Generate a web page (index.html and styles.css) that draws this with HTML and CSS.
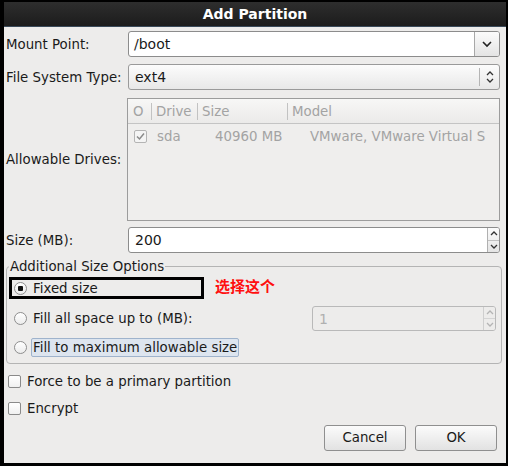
FILE: index.html
```html
<!DOCTYPE html>
<html>
<head>
<meta charset="utf-8">
<link rel="stylesheet" href="styles.css">
</head>
<body>
<div class="window">
  <div class="titlebar">Add Partition</div>
  <div class="content">
    <div class="form">
      <label class="lbl">Mount Point:</label>
      <div class="combo-entry">
        <div class="ce-text">/boot</div>
        <div class="ce-btn">
          <svg width="12" height="8" viewBox="0 0 12 8"><path d="M2 2 L6 6 L10 2" fill="none" stroke="#222" stroke-width="1.6"/></svg>
        </div>
      </div>

      <label class="lbl">File System Type:</label>
      <div class="combo-btn">
        <div class="cb-text">ext4</div>
        <div class="cb-sep"></div>
        <div class="cb-arrows">
          <svg width="10" height="14" viewBox="0 0 10 14"><path d="M2 5 L5 2 L8 5 M2 9 L5 12 L8 9" fill="none" stroke="#333" stroke-width="1.3"/></svg>
        </div>
      </div>

      <label class="lbl">Allowable Drives:</label>
      <div class="tree">
        <div class="tree-head">
          <div class="th c0">O</div>
          <div class="th c1">Drive</div>
          <div class="th c2">Size</div>
          <div class="th c3">Model</div>
        </div>
        <div class="tree-row">
          <div class="td c0"><span class="tcheck"><svg width="11" height="11" viewBox="0 0 11 11"><path d="M2 5.5 L4.5 8 L9 2.5" fill="none" stroke="#8a8a8a" stroke-width="1.5"/></svg></span></div>
          <div class="td c1">sda</div>
          <div class="td c2">40960 MB</div>
          <div class="td c3">VMware, VMware Virtual S</div>
        </div>
      </div>

      <label class="lbl">Size (MB):</label>
      <div class="spin">
        <div class="sp-text">200</div>
        <div class="sp-btns">
          <div class="sp-b"><svg width="10" height="7" viewBox="0 0 10 7"><path d="M2 5 L5 2 L8 5" fill="none" stroke="#333" stroke-width="1.3"/></svg></div>
          <div class="sp-b sp-b2"><svg width="10" height="7" viewBox="0 0 10 7"><path d="M2 2 L5 5 L8 2" fill="none" stroke="#333" stroke-width="1.3"/></svg></div>
        </div>
      </div>
    </div>

    <fieldset class="frame">
      <legend>Additional Size Options</legend>
      <div class="opt opt1">
        <span class="radio on"><span class="dot"></span></span>
        <span class="otext">Fixed size</span>
      </div>
      <div class="opt opt2">
        <span class="radio"></span>
        <span class="otext">Fill all space up to (MB):</span>
        <div class="spin dis">
          <div class="sp-text">1</div>
          <div class="sp-btns">
            <div class="sp-b"><svg width="10" height="7" viewBox="0 0 10 7"><path d="M2 5 L5 2 L8 5" fill="none" stroke="#b4b4b4" stroke-width="1.3"/></svg></div>
            <div class="sp-b sp-b2"><svg width="10" height="7" viewBox="0 0 10 7"><path d="M2 2 L5 5 L8 2" fill="none" stroke="#b4b4b4" stroke-width="1.3"/></svg></div>
          </div>
        </div>
      </div>
      <div class="opt opt3">
        <span class="radio"></span>
        <span class="otext focus">Fill to maximum allowable size</span>
      </div>
      <div class="annot-box"></div>
      <div class="annot-text">选择这个</div>
    </fieldset>

    <div class="check-row first"><span class="cbox"></span><span>Force to be a primary partition</span></div>
    <div class="check-row"><span class="cbox"></span><span>Encrypt</span></div>

    <div class="buttons">
      <div class="btn">Cancel</div>
      <div class="btn">OK</div>
    </div>
  </div>
</div>
</body>
</html>
```

FILE: styles.css
```css
html, body {
  margin: 0;
  padding: 0;
  background: #000;
}
body {
  width: 508px;
  height: 466px;
  overflow: hidden;
  font-family: "DejaVu Sans", sans-serif;
  font-size: 13.33px;
  color: #1a1a1a;
}
.window {
  margin: 2px 2px 0 4px;
  height: 461px;
  display: flex;
  flex-direction: column;
  background: #edeceb;
}
.titlebar {
  height: 24px;
  flex: none;
  background: linear-gradient(#2e2e2e, #1c1c1c);
  border-bottom: 1px solid #3a4a5a;
  color: #fff;
  font-weight: bold;
  font-size: 14px;
  line-height: 24px;
  text-align: center;
}
.content {
  flex: 1;
  position: relative;
  padding: 4px 6px 0 2px;
  display: flex;
  flex-direction: column;
}
.form {
  display: grid;
  grid-template-columns: 122px 1fr;
  row-gap: 7px;
  align-items: center;
}
.lbl {
  white-space: nowrap;
}
.combo-entry {
  height: 26px;
  box-sizing: border-box;
  display: flex;
  border: 1px solid #8c8c8c;
  border-radius: 3px;
  background: #fff;
  overflow: hidden;
}
.ce-text {
  flex: 1;
  padding-left: 5px;
  line-height: 24px;
  font-size: 14px;
}
.ce-btn {
  width: 24px;
  border-left: 1px solid #a8a8a8;
  background: linear-gradient(#fbfbfb, #e4e4e4);
  display: flex;
  align-items: center;
  justify-content: center;
}
.combo-btn {
  height: 26px;
  box-sizing: border-box;
  display: flex;
  align-items: center;
  border: 1px solid #9a9a9a;
  border-radius: 3px;
  background: linear-gradient(#fcfcfc, #e8e8e8);
}
.cb-text {
  flex: 1;
  padding-left: 6px;
  font-size: 14px;
}
.cb-sep {
  width: 1px;
  height: 18px;
  background: #b4b4b4;
}
.cb-arrows {
  width: 19px;
  display: flex;
  justify-content: center;
  align-items: center;
}
.tree {
  height: 123px;
  box-sizing: border-box;
  border: 1px solid #9c9c9c;
  background: #efeeed;
  margin-left: -1px;
  color: #a3a3a3;
  font-size: 13.33px;
  margin-top: 1px;
}
.tree-head {
  height: 25px;
  box-sizing: border-box;
  display: flex;
  align-items: center;
  background: linear-gradient(#f7f7f6, #ebeae9);
  border-bottom: 1px solid #c4c4c4;
  padding-top: 1px;
}
.th {
  height: 17px;
  line-height: 17px;
  padding-left: 4px;
  box-sizing: border-box;
  border-left: 1px solid #c2c2c2;
}
.th.c0 { border-left: none; }
.c0 { width: 23px; padding-left: 5px; box-sizing: border-box; }
.c1 { width: 46px; }
.c2 { width: 90px; }
.c3 { flex: 1; }
.tree-row {
  display: flex;
  height: 24px;
  align-items: center;
}
.td { box-sizing: border-box; }
.td.c0 { padding-left: 6px; }
.td.c1 { padding-left: 6px; }
.td.c2 { padding-left: 18px; }
.td.c3 { padding-left: 23px; }
.tcheck {
  display: inline-flex;
  width: 13px;
  height: 13px;
  box-sizing: border-box;
  border: 1px solid #b4b4b4;
  border-radius: 2px;
  background: #f4f4f4;
  align-items: center;
  justify-content: center;
  vertical-align: middle;
}
.spin {
  height: 26px;
  box-sizing: border-box;
  display: flex;
  border: 1px solid #8c8c8c;
  border-radius: 3px;
  background: #fff;
  overflow: hidden;
  margin-top: -1px;
}
.sp-text {
  flex: 1;
  padding-left: 6px;
  line-height: 24px;
  font-size: 14px;
}
.sp-btns {
  width: 11px;
  display: flex;
  flex-direction: column;
  border-left: 1px solid #b0b0b0;
  background: linear-gradient(#fbfbfb, #e4e4e4);
}
.sp-b {
  flex: 1;
  display: flex;
  align-items: center;
  justify-content: center;
}
.sp-b2 { border-top: 1px solid #c0c0c0; }
.spin.dis {
  width: 184px;
  margin: 0 0 0 auto;
  height: 25px;
  border-color: #b9b9b9;
  background: #edeceb;
  color: #b0b0b0;
}
.spin.dis .sp-btns {
  background: #edeceb;
  border-left-color: #cfcfcf;
}
.spin.dis .sp-b2 { border-top-color: #d4d4d4; }
.frame {
  position: relative;
  margin: 6px -2px 0 0;
  padding: 0 5px 3px 6px;
  border: 1px solid #b4b4b4;
  border-radius: 4px;
  min-width: 0;
}
.frame legend {
  padding: 0 1px;
  margin-left: -4px;
  font-size: 13.33px;
  color: #1a1a1a;
}
.opt {
  display: flex;
  align-items: center;
}
.opt1 { height: 28px; }
.opt2 { height: 33px; }
.opt3 { height: 25px; }
.radio {
  width: 13px;
  height: 13px;
  box-sizing: border-box;
  border: 1px solid #8e8e8e;
  border-radius: 50%;
  background: linear-gradient(#fff, #ececec);
  display: inline-flex;
  align-items: center;
  justify-content: center;
  margin-left: 1px;
  margin-right: 4px;
  flex: none;
}
.dot {
  width: 5px;
  height: 5px;
  background: #111;
  border-radius: 1px;
}
.otext {
  padding: 1px 2px;
  white-space: nowrap;
}
.otext.focus {
  background: #dde5ef;
  border: 1px solid #9fb3cc;
  border-radius: 2px;
  padding: 1px 1px;
}
.annot-box {
  position: absolute;
  left: 2px;
  top: 3px;
  width: 195px;
  height: 22px;
  box-sizing: border-box;
  border: 3px solid #000;
}
.annot-text {
  position: absolute;
  left: 208px;
  top: 1px;
  color: #ff1010;
  font-family: "Noto Sans CJK SC", sans-serif;
  font-size: 15px;
  font-weight: bold;
}
.check-row {
  display: flex;
  align-items: center;
  height: 27px;
  margin-left: 2px;
}
.check-row.first { margin-top: 4px; }
.cbox {
  width: 13px;
  height: 13px;
  box-sizing: border-box;
  border: 1px solid #8a8a8a;
  border-radius: 2px;
  background: linear-gradient(#fff, #f0f0f0);
  margin-right: 6px;
}
.buttons {
  display: flex;
  justify-content: flex-end;
  gap: 9px;
  margin-top: auto;
  margin-bottom: 12px;
  padding-right: 3px;
}
.btn {
  width: 82px;
  height: 26px;
  box-sizing: border-box;
  border: 1px solid #8f8f8f;
  border-radius: 3px;
  background: linear-gradient(#fbfbfb, #e2e2e2);
  text-align: center;
  line-height: 24px;
  font-size: 13.33px;
}
```
